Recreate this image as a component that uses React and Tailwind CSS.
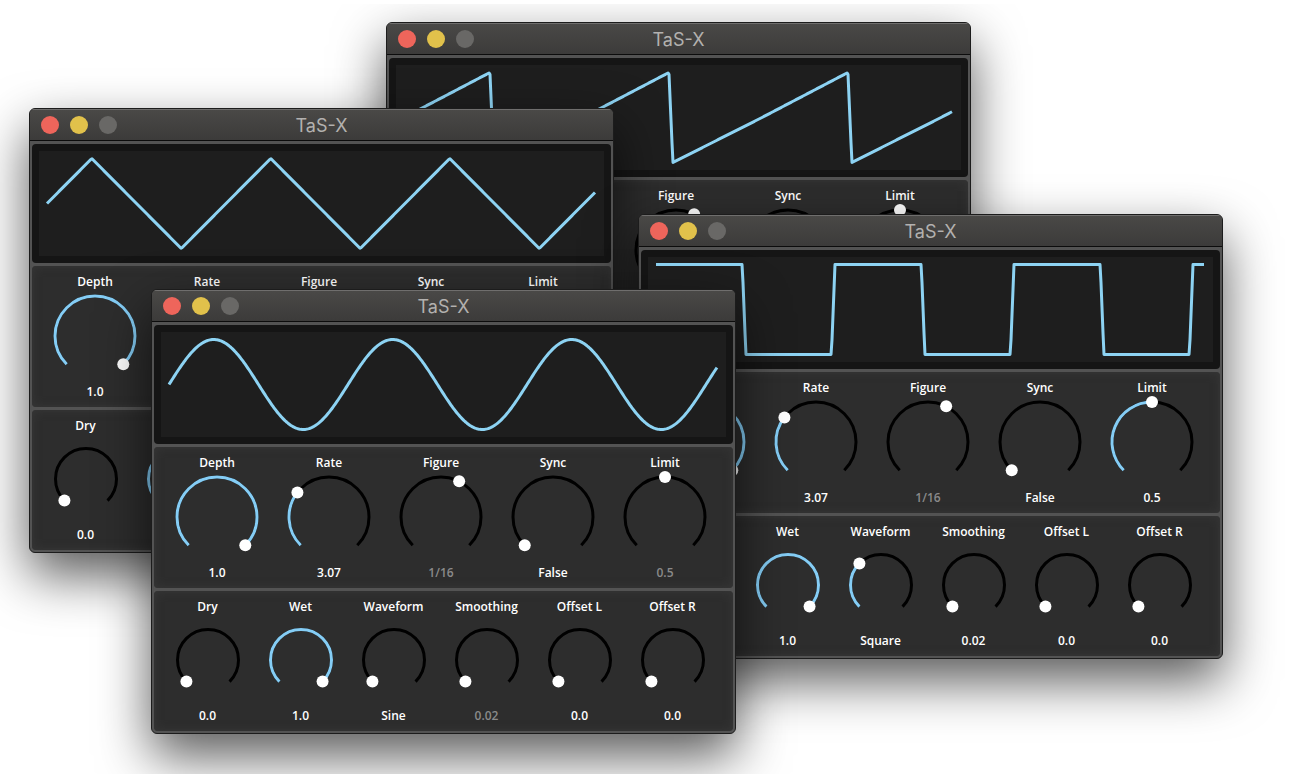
import React, { useId, useState } from "react";

const WAVEFORMS = ["Sine", "Square", "Triangle", "Saw"];
const FIGURES = ["4/1", "2/1", "1/1", "1/2", "1/4", "1/8", "1/16", "1/32", "1/64", "1/128", "1/256"];

const SCREEN_W = 548;
const SCREEN_H = 105;
const PERIOD = 179;

// value of each waveform at phase p (0..1), in the range -1..1
const shapes = {
  Sine: (p) => Math.sin(2 * Math.PI * p),
  Triangle: (p) => (p < 0.25 ? 4 * p : p < 0.75 ? 2 - 4 * p : 4 * p - 4),
  Saw: (p) => {
    if (p < 0.48) return p / 0.48;
    if (p < 0.502) return 1 - (2 * (p - 0.48)) / 0.022;
    return (p - 0.502) / 0.498 - 1;
  },
  Square: (p) => {
    if (p < 0.482) return 1;
    if (p < 0.502) return 1 - (2 * (p - 0.482)) / 0.02;
    if (p < 0.98) return -1;
    return (2 * (p - 0.98)) / 0.02 - 1;
  },
};

function wavePoints(shape) {
  const points = [];
  for (let x = 0; x <= SCREEN_W; x += 1) {
    let y = shapes[shape]((x % PERIOD) / PERIOD);
    if (shape === "Square" && x === 0) y = 1;
    points.push(`${x},${(SCREEN_H / 2 - y * 45).toFixed(2)}`);
  }
  return points.join(" ");
}

// knobs turn through 270 degrees, starting at the lower left
function polar(c, r, t) {
  const a = ((135 + 270 * t) * Math.PI) / 180;
  return [c + r * Math.cos(a), c + r * Math.sin(a)];
}

function arc(c, r, from, to) {
  const [x1, y1] = polar(c, r, from);
  const [x2, y2] = polar(c, r, to);
  const large = (to - from) * 270 > 180 ? 1 : 0;
  return `M ${x1} ${y1} A ${r} ${r} 0 ${large} 1 ${x2} ${y2}`;
}

function Knob({ name, value, onChange, min = 0, max = 1, step = 0.01, format, disabled, small }) {
  const id = useId();
  const size = small ? 66 : 84;
  const r = small ? 30.5 : 40;
  const c = size / 2;
  const t = (value - min) / (max - min);
  const [tx, ty] = polar(c, r, t);

  return (
    <div className="flex flex-1 flex-col items-center text-xs leading-4 font-semibold text-white">
      <label htmlFor={id}>{name}</label>
      <div className={small ? "relative mt-3 mb-[15px]" : "relative mt-1 mb-1.5"}>
        <svg width={size} height={size} className="block overflow-visible" fill="none" strokeWidth="3">
          <path d={arc(c, r, 0, 1)} stroke="#000" />
          {!disabled && t > 0 && <path d={arc(c, r, 0, t)} stroke="#85cdf5" />}
          <circle cx={tx} cy={ty} r="6" fill="#fff" />
        </svg>
        <input
          id={id}
          type="range"
          min={min}
          max={max}
          step={step}
          value={value}
          onChange={(e) => onChange(Number(e.target.value))}
          className="absolute inset-0 h-full w-full cursor-pointer opacity-0"
        />
      </div>
      <output htmlFor={id} className={disabled ? "text-[#8a8a8a]" : "text-white"}>
        {format(value)}
      </output>
    </div>
  );
}

function PluginWindow({ waveform, className }) {
  const [params, setParams] = useState({
    depth: 1,
    rate: 3.07,
    figure: 6,
    sync: 0,
    limit: 0.5,
    dry: 0,
    wet: 1,
    waveform: WAVEFORMS.indexOf(waveform),
    smoothing: 0.02,
    offsetL: 0,
    offsetR: 0,
  });

  const bind = (key) => ({
    value: params[key],
    onChange: (v) => setParams({ ...params, [key]: v }),
  });

  const shape = WAVEFORMS[params.waveform];
  const one = (v) => v.toFixed(1);
  const two = (v) => v.toFixed(2);

  return (
    <section
      className={`absolute w-[585px] overflow-hidden rounded-md border border-[#1c1c1c] bg-[#535353] shadow-[0_22px_52px_rgba(0,0,0,0.65)] ${className}`}
    >
      <header className="grid h-8 grid-cols-[1fr_auto_1fr] items-center border-b border-[#0c0c0c] bg-linear-to-b from-[#4a4947] to-[#3c3b3a] px-[11px] shadow-[inset_0_1px_0_#6f6e6d]">
        <div className="flex gap-[11px]">
          <button aria-label="Close" className="size-[18px] rounded-full bg-[#ee655b]"></button>
          <button aria-label="Minimize" className="size-[18px] rounded-full bg-[#e1c14b]"></button>
          <button aria-label="Zoom" className="size-[18px] rounded-full bg-[#696866]"></button>
        </div>
        <h1 className="pt-0.5 font-['Inter',sans-serif] text-lg leading-6 text-[#b3b1af]">TaS-X</h1>
      </header>

      <div className="flex flex-col gap-[3px] px-[2px] pt-[3px] pb-[2px]">
        <div className="rounded-sm bg-[#151515] p-[7px]">
          <div className="bg-[#1e1e1e] pr-[9px] pl-2">
            <svg viewBox={`0 0 ${SCREEN_W} ${SCREEN_H}`} className="block w-full overflow-visible">
              <polyline
                points={wavePoints(shape)}
                fill="none"
                stroke="#8dd3f3"
                strokeWidth="3"
                strokeLinejoin="round"
              />
            </svg>
          </div>
        </div>

        <div className="flex rounded-sm bg-[#2d2d2d] pt-2 pr-3 pb-[7px] pl-[7px] shadow-[inset_0_0_10px_#383838]">
          <Knob name="Depth" format={one} {...bind("depth")} />
          <Knob name="Rate" max={10} format={two} {...bind("rate")} />
          <Knob
            name="Figure"
            max={10}
            step={1}
            format={(v) => FIGURES[v]}
            disabled={!params.sync}
            {...bind("figure")}
          />
          <Knob name="Sync" step={1} format={(v) => (v ? "True" : "False")} {...bind("sync")} />
          <Knob name="Limit" format={one} disabled={shape !== "Square"} {...bind("limit")} />
        </div>

        <div className="flex rounded-sm bg-[#2d2d2d] pt-2 pr-[14px] pb-[7px] pl-[7px] shadow-[inset_0_0_10px_#383838]">
          <Knob small name="Dry" format={one} {...bind("dry")} />
          <Knob small name="Wet" format={one} {...bind("wet")} />
          <Knob small name="Waveform" max={3} step={1} format={(v) => WAVEFORMS[v]} {...bind("waveform")} />
          <Knob
            small
            name="Smoothing"
            min={0.02}
            format={two}
            disabled={shape === "Sine"}
            {...bind("smoothing")}
          />
          <Knob small name="Offset L" format={one} {...bind("offsetL")} />
          <Knob small name="Offset R" format={one} {...bind("offsetR")} />
        </div>
      </div>
    </section>
  );
}

function App() {
  return (
    <main className="min-h-screen w-full bg-white pt-1 font-['Open_Sans',sans-serif]">
      <div className="relative h-[calc(100vh-4px)] overflow-hidden">
        <PluginWindow waveform="Saw" className="top-[18px] left-[386px]" />
        <PluginWindow waveform="Triangle" className="top-[104px] left-[29px]" />
        <PluginWindow waveform="Square" className="top-[210px] left-[638px]" />
        <PluginWindow waveform="Sine" className="top-[285px] left-[151px]" />
      </div>
    </main>
  );
}

export default App;
